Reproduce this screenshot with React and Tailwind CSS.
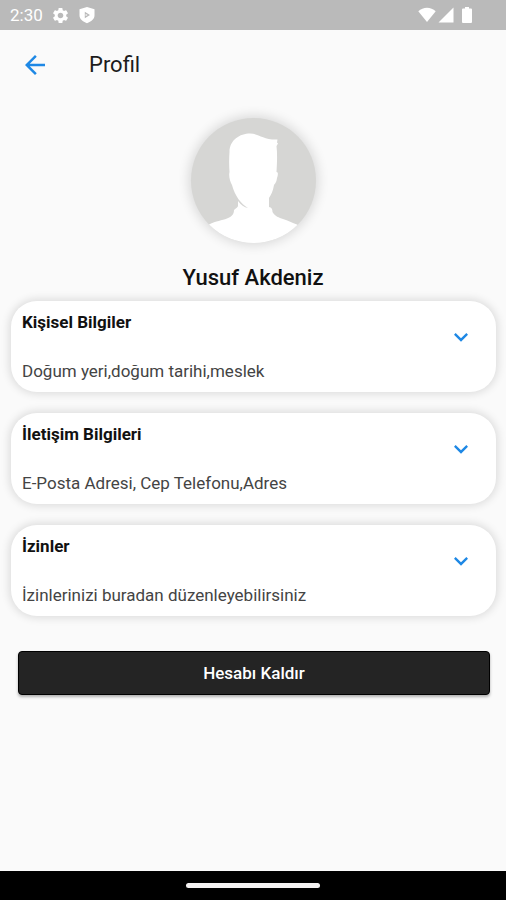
import React from 'react';
import { MdArrowBack, MdKeyboardArrowDown, MdSettings } from 'react-icons/md';

const sections = [
  { id: 'personal', title: 'Kişisel Bilgiler', detail: 'Doğum yeri,doğum tarihi,meslek' },
  { id: 'contact', title: 'İletişim Bilgileri', detail: 'E-Posta Adresi, Cep Telefonu,Adres' },
  { id: 'permissions', title: 'İzinler', detail: 'İzinlerinizi buradan düzenleyebilirsiniz' },
];

const StatusBar = () => (
  <div className="flex h-[30px] items-center justify-between bg-[#bababa] pr-[34px] pl-[10px] text-white">
    <div className="flex items-center gap-2">
      <span className="text-[17px] leading-5">2:30</span>
      <MdSettings size={19} />
      <svg width="18" height="18" viewBox="0 0 18 18">
        <path
          fillRule="evenodd"
          fill="currentColor"
          d="M9 1 16.500 3.200v6.300c0 3.400-3.200 6-7.500 7.800-4.300-1.800-7.500-4.400-7.500-7.800V3.200zM6.800 5.800v6.400L12 9z"
        />
        <path fill="currentColor" d="m7.600 8 2 1-2 1z" />
      </svg>
    </div>
    <div className="flex items-center gap-[2px]">
      <svg width="18" height="16" viewBox="0 0 18 16" fill="currentColor">
        <path d="M9 15 .3 4.300C2.800 2 5.700.800 9 .800s6.200 1.200 8.700 3.500z" />
      </svg>
      <svg width="16" height="16" viewBox="0 0 16 16" fill="currentColor">
        <path d="M15.500.500v15H.500z" />
      </svg>
      <svg width="10" height="16" viewBox="0 0 10 16" fill="currentColor" className="ml-[6px]">
        <path d="M3 0h4v1.500h2q1 0 1 1V15q0 1-1 1H1q-1 0-1-1V2.500q0-1 1-1h2z" />
      </svg>
    </div>
  </div>
);

const Avatar = () => (
  <div className="size-[125px] overflow-hidden rounded-full bg-[#d6d6d4] shadow-[0_0_12px_2px_rgba(0,0,0,0.14)]">
    <svg viewBox="0 0 125 125" className="size-full" fill="#fff" role="img" aria-label="Profil resmi">
      <path d="M59 15.500C68 15.500 72 22 86.500 21.500L86 24.500 87 25.500 85.500 28C86.500 36 86 46 85.500 54C87.500 54 87 57 86 60C85.500 64 84.500 65 83 67C82 73 80 77 78 80V89C80.500 89.500 81.500 91 81.500 94C84 98.500 88 99.500 92 101C97 102.500 101.500 105 106 106.500L125 125H0L18 106.500C25 103 31 102.500 36 100.500C41 98.500 43 96 43 92C45 90 47 89 47 88V83C50 87 53 89.500 57 90C50 86 44 78 41 67C39 64 37.500 58 38.500 54C38 47 38 41 38.500 34C38.500 22 49 15.500 59 15.500z" />
    </svg>
  </div>
);

const SectionCard = ({ title, detail }) => (
  <button
    type="button"
    className="flex h-[91px] w-full justify-between rounded-[26px] bg-white py-[11px] pr-[21px] pl-[11px] text-left shadow-[0_0_8px_2px_rgba(0,0,0,0.12)]"
  >
    <span className="flex flex-col justify-between">
      <span className="text-[17px] leading-5 font-bold text-[#111]">{title}</span>
      <span className="text-[17px] leading-5 text-[#444]">{detail}</span>
    </span>
    <MdKeyboardArrowDown size={28} className="mt-[11px] text-[#1e88e5]" />
  </button>
);

export default function App() {
  return (
    <div className="flex min-h-screen flex-col bg-[#fafafa] font-[Roboto,sans-serif] text-[#1c1c1c]">
      <StatusBar />
      <header className="flex h-[70px] items-center gap-[39px] px-5">
        <button type="button" aria-label="Geri">
          <MdArrowBack size={30} className="text-[#1e88e5]" />
        </button>
        <h1 className="text-[22px] leading-7">Profil</h1>
      </header>
      <main className="flex flex-1 flex-col pt-[18px]">
        <div className="flex flex-col items-center gap-[21px]">
          <Avatar />
          <h2 className="text-[22px] leading-7 font-medium text-[#111]">Yusuf Akdeniz</h2>
        </div>
        <div className="mt-[9px] flex flex-col gap-[21px] pr-[10px] pl-[11px]">
          {sections.map((s) => (
            <SectionCard key={s.id} title={s.title} detail={s.detail} />
          ))}
        </div>
        <div className="mt-[35px] pr-4 pl-[18px]">
          <button
            type="button"
            className="h-11 w-full rounded-[4px] border border-black bg-[#242424] text-[17px] leading-5 font-medium text-white shadow-[0_2px_3px_rgba(0,0,0,0.3)]"
          >
            Hesabı Kaldır
          </button>
        </div>
      </main>
      <footer className="flex h-[29px] items-center justify-center bg-black">
        <div className="h-[5px] w-[134px] rounded-full bg-[#f4f2f2]" />
      </footer>
    </div>
  );
}
